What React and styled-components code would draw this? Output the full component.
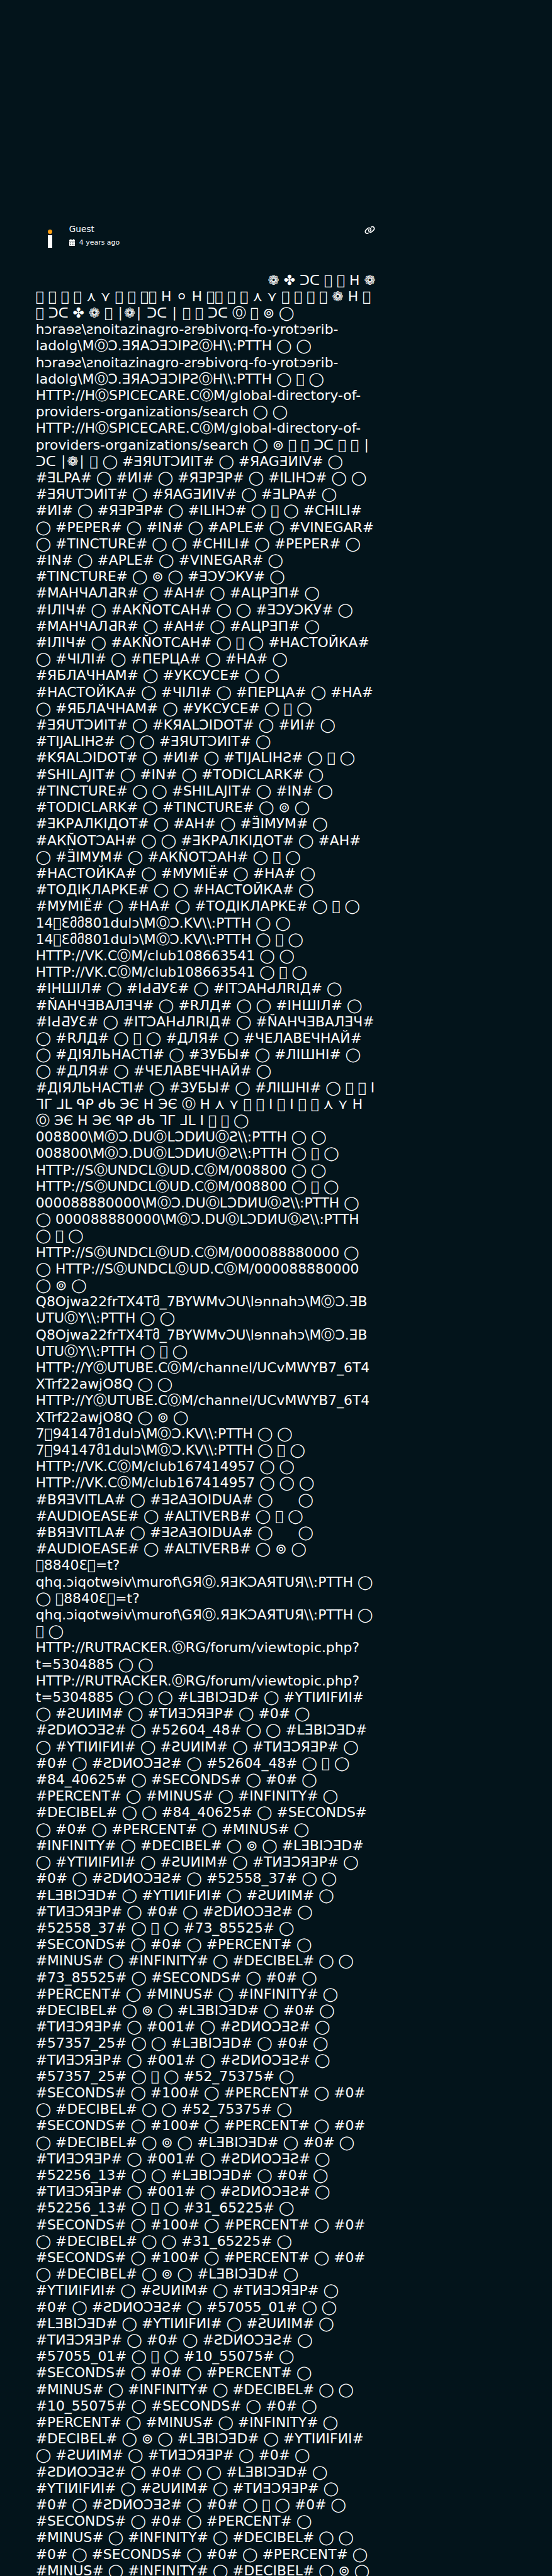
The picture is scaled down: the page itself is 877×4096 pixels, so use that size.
import React from "react";
import styled, { createGlobalStyle } from "styled-components";
import { FaLink, FaCalendarDays } from "react-icons/fa6";

const GlobalStyle = createGlobalStyle`
    body {
        margin: 0;
        background-color: #03141b;
        color: #fff;
        font-family: "DejaVu Sans", sans-serif;
    }
`;

const Page = styled.main`
    box-sizing: border-box;
    width: 877px;
    height: 4096px;
    padding: 356px 0 0 56.7px;
    overflow: hidden;
`;

const Header = styled.header`
    display: flex;
    align-items: flex-start;
    width: 539.5px;
    height: 76.6px;
`;

const Avatar = styled.div`
    display: flex;
    flex-direction: column;
    align-items: center;
    gap: 1.4px;
    width: 7.6px;
    margin: 8.6px 26.6px 0 18.9px;
`;

const Flame = styled.span`
    width: 7.6px;
    height: 7.8px;
    border-radius: 50%;
    background-color: #fd9f13;
`;

const Candle = styled.span`
    width: 7.6px;
    height: 19.8px;
    background-color: #fff;
`;

const Author = styled.div`
    flex: 1;
`;

const Name = styled.div`
    font-size: 13.66px;
    line-height: 17px;
`;

const Posted = styled.div`
    display: flex;
    align-items: center;
    gap: 6.5px;
    margin-top: 6px;
    font-size: 10.93px;
    line-height: 13px;
`;

const CalendarIcon = styled(FaCalendarDays)`
    width: 9.6px;
    height: 10.93px;
`;

const LinkIcon = styled(FaLink)`
    width: 17px;
    height: 13.66px;
    margin-top: 3.3px;
`;

const Post = styled.div`
    width: 540px;
    font-size: 21.856px;
    line-height: 26.214px;
`;

const Line = styled.div`
    height: 26.214px;
    white-space: pre;
    text-align: ${({ $end }) => ($end ? "right" : "left")};
`;

// "¤" stands for a character without a glyph, drawn as an empty box
const withBoxes = (line) => line.replace(/¤/g, "\uE123");

const lines = [
    "❁ ✤ ᑐᑕ ¤ ¤ H ❁",
    "¤ ¤ ¤ ¤ ⋏ ⋎ ¤ ¤ ¤¤ H ⚪ H ¤¤ ¤ ¤ ⋏ ⋎ ¤ ¤ ¤ ¤ ❁ H ¤",
    "¤ ᑐᑕ ✤ ❁ ¤ ∣❁∣ ᑐᑕ ∣ ¤ ¤ ᑐᑕ Ⓞ ¤ ⊚ ◯",
    "hɔraɘƨ\\ƨnoitazinagro-ƨrɘbivorq-fo-yrotɔɘrib-",
    "ladolg\\MⓄƆ.ƎЯAƆƎƆIPƧⓄH\\\\:PTTH ◯ ◯",
    "hɔraɘƨ\\ƨnoitazinagro-ƨrɘbivorq-fo-yrotɔɘrib-",
    "ladolg\\MⓄƆ.ƎЯAƆƎƆIPƧⓄH\\\\:PTTH ◯ ¤ ◯",
    "HTTP://HⓄSPICECARE.CⓄM/global-directory-of-",
    "providers-organizations/search ◯ ◯",
    "HTTP://HⓄSPICECARE.CⓄM/global-directory-of-",
    "providers-organizations/search ◯ ⊚ ¤ ¤ ᑐᑕ ¤ ¤ ∣",
    "ᑐᑕ ∣❁∣ ¤ ◯ #ƎЯUTƆИIT# ◯ #ЯAGƎИIV# ◯",
    "#ƎLPA# ◯ #ИI# ◯ #ЯƎPƎP# ◯ #ILIHƆ# ◯ ◯",
    "#ƎЯUTƆИIT# ◯ #ЯAGƎИIV# ◯ #ƎLPA# ◯",
    "#ИI# ◯ #ЯƎPƎP# ◯ #ILIHƆ# ◯ ¤ ◯ #CHILI#",
    "◯ #PEPER# ◯ #IN# ◯ #APLE# ◯ #VINEGAR#",
    "◯ #TINCTURE# ◯ ◯ #CHILI# ◯ #PEPER# ◯",
    "#IN# ◯ #APLE# ◯ #VINEGAR# ◯",
    "#TINCTURE# ◯ ⊚ ◯ #ƎƆУƆКУ# ◯",
    "#МАНЧАЛƋR# ◯ #АН# ◯ #АЦРƎП# ◯",
    "#ІЛІЧ# ◯ #АКN̆ОТСАН# ◯ ◯ #ƎƆУƆКУ# ◯",
    "#МАНЧАЛƋR# ◯ #АН# ◯ #АЦРƎП# ◯",
    "#ІЛІЧ# ◯ #АКN̆ОТСАН# ◯ ¤ ◯ #НАСТОЙКА#",
    "◯ #ЧІЛІ# ◯ #ПЕРЦА# ◯ #НА# ◯",
    "#ЯБЛАЧНАМ# ◯ #УКСУСЕ# ◯ ◯",
    "#НАСТОЙКА# ◯ #ЧІЛІ# ◯ #ПЕРЦА# ◯ #НА#",
    "◯ #ЯБЛАЧНАМ# ◯ #УКСУСЕ# ◯ ¤ ◯",
    "#ƎЯUTƆИIT# ◯ #KЯALƆIDOT# ◯ #ИI# ◯",
    "#TIJALIHƧ# ◯ ◯ #ƎЯUTƆИIT# ◯",
    "#KЯALƆIDOT# ◯ #ИI# ◯ #TIJALIHƧ# ◯ ¤ ◯",
    "#SHILAJIT# ◯ #IN# ◯ #TODICLARK# ◯",
    "#TINCTURE# ◯ ◯ #SHILAJIT# ◯ #IN# ◯",
    "#TODICLARK# ◯ #TINCTURE# ◯ ⊚ ◯",
    "#ƎКРАЛКІДОТ# ◯ #АН# ◯ #Ǝ̈ІМУМ# ◯",
    "#АКN̆ОТƆАН# ◯ ◯ #ƎКРАЛКІДОТ# ◯ #АН#",
    "◯ #Ǝ̈ІМУМ# ◯ #АКN̆ОТƆАН# ◯ ¤ ◯",
    "#НАСТОЙКА# ◯ #МУМІЁ# ◯ #НА# ◯",
    "#ТОДІКЛАРКЕ# ◯ ◯ #НАСТОЙКА# ◯",
    "#МУМІЁ# ◯ #НА# ◯ #ТОДІКЛАРКЕ# ◯ ¤ ◯",
    "14¤Ɛმმ801dulɔ\\MⓄƆ.KV\\\\:PTTH ◯ ◯",
    "14¤Ɛმმ801dulɔ\\MⓄƆ.KV\\\\:PTTH ◯ ¤ ◯",
    "HTTP://VK.CⓄM/club108663541 ◯ ◯",
    "HTTP://VK.CⓄM/club108663541 ◯ ¤ ◯",
    "#ІНШІЛ# ◯ #ІԀƋУƐ# ◯ #ІТƆАНԀЛRІД# ◯",
    "#N̆АНЧƎВАЛƎЧ# ◯ #RЛД# ◯ ◯ #ІНШІЛ# ◯",
    "#ІԀƋУƐ# ◯ #ІТƆАНԀЛRІД# ◯ #N̆АНЧƎВАЛƎЧ#",
    "◯ #RЛД# ◯ ¤ ◯ #ДЛЯ# ◯ #ЧЕЛАВЕЧНАЙ#",
    "◯ #ДІЯЛЬНАСТІ# ◯ #ЗУБЫ# ◯ #ЛІШНІ# ◯",
    "◯ #ДЛЯ# ◯ #ЧЕЛАВЕЧНАЙ# ◯",
    "#ДІЯЛЬНАСТІ# ◯ #ЗУБЫ# ◯ #ЛІШНІ# ◯ ¤ ¤ I",
    "ᒣᒥ ᒧᒪ ᑫᑭ ᑯᑲ ЭЄ H ЭЄ Ⓞ H ⋏ ⋎ ¤ ¤ I ¤ I ¤ ¤ ⋏ ⋎ H",
    "Ⓞ ЭЄ H ЭЄ ᑫᑭ ᑯᑲ ᒣᒥ ᒧᒪ I ¤ ¤ ◯",
    "008800\\MⓄƆ.DUⓄLƆDИUⓄƧ\\\\:PTTH ◯ ◯",
    "008800\\MⓄƆ.DUⓄLƆDИUⓄƧ\\\\:PTTH ◯ ¤ ◯",
    "HTTP://SⓄUNDCLⓄUD.CⓄM/008800 ◯ ◯",
    "HTTP://SⓄUNDCLⓄUD.CⓄM/008800 ◯ ¤ ◯",
    "000088880000\\MⓄƆ.DUⓄLƆDИUⓄƧ\\\\:PTTH ◯",
    "◯ 000088880000\\MⓄƆ.DUⓄLƆDИUⓄƧ\\\\:PTTH",
    "◯ ¤ ◯",
    "HTTP://SⓄUNDCLⓄUD.CⓄM/000088880000 ◯",
    "◯ HTTP://SⓄUNDCLⓄUD.CⓄM/000088880000",
    "◯ ⊚ ◯",
    "Q8Ojwa22frTX4Tმ_7BYWMvƆU\\lɘnnahɔ\\MⓄƆ.ƎB",
    "UTUⓄY\\\\:PTTH ◯ ◯",
    "Q8Ojwa22frTX4Tმ_7BYWMvƆU\\lɘnnahɔ\\MⓄƆ.ƎB",
    "UTUⓄY\\\\:PTTH ◯ ¤ ◯",
    "HTTP://YⓄUTUBE.CⓄM/channel/UCvMWYB7_6T4",
    "XTrf22awjO8Q ◯ ◯",
    "HTTP://YⓄUTUBE.CⓄM/channel/UCvMWYB7_6T4",
    "XTrf22awjO8Q ◯ ⊚ ◯",
    "7¤94147მ1dulɔ\\MⓄƆ.KV\\\\:PTTH ◯ ◯",
    "7¤94147მ1dulɔ\\MⓄƆ.KV\\\\:PTTH ◯ ¤ ◯",
    "HTTP://VK.CⓄM/club167414957 ◯ ◯",
    "HTTP://VK.CⓄM/club167414957 ◯ ◯ ◯",
    "#BЯƎVITLA# ◯ #ƎƧAƎOIDUA# ◯ \u2003\u2002◯",
    "#AUDIOEASE# ◯ #ALTIVERB# ◯ ¤ ◯",
    "#BЯƎVITLA# ◯ #ƎƧAƎOIDUA# ◯ \u2003\u2002◯",
    "#AUDIOEASE# ◯ #ALTIVERB# ◯ ⊚ ◯",
    "¤8840Ɛ¤=t?",
    "qhq.ɔiqotwɘiv\\murof\\GЯⓄ.ЯƎKƆAЯTUЯ\\\\:PTTH ◯",
    "◯ ¤8840Ɛ¤=t?",
    "qhq.ɔiqotwɘiv\\murof\\GЯⓄ.ЯƎKƆAЯTUЯ\\\\:PTTH ◯",
    "¤ ◯",
    "HTTP://RUTRACKER.ⓄRG/forum/viewtopic.php?",
    "t=5304885 ◯ ◯",
    "HTTP://RUTRACKER.ⓄRG/forum/viewtopic.php?",
    "t=5304885 ◯ ◯ ◯ #LƎBIƆƎD# ◯ #YTIИIFИI#",
    "◯ #ƧUИIM# ◯ #TИƎƆЯƎP# ◯ #0# ◯",
    "#ƧDИOƆƎƧ# ◯ #52604_48# ◯ ◯ #LƎBIƆƎD#",
    "◯ #YTIИIFИI# ◯ #ƧUИIM# ◯ #TИƎƆЯƎP# ◯",
    "#0# ◯ #ƧDИOƆƎƧ# ◯ #52604_48# ◯ ¤ ◯",
    "#84_40625# ◯ #SECONDS# ◯ #0# ◯",
    "#PERCENT# ◯ #MINUS# ◯ #INFINITY# ◯",
    "#DECIBEL# ◯ ◯ #84_40625# ◯ #SECONDS#",
    "◯ #0# ◯ #PERCENT# ◯ #MINUS# ◯",
    "#INFINITY# ◯ #DECIBEL# ◯ ⊚ ◯ #LƎBIƆƎD#",
    "◯ #YTIИIFИI# ◯ #ƧUИIM# ◯ #TИƎƆЯƎP# ◯",
    "#0# ◯ #ƧDИOƆƎƧ# ◯ #52558_37# ◯ ◯",
    "#LƎBIƆƎD# ◯ #YTIИIFИI# ◯ #ƧUИIM# ◯",
    "#TИƎƆЯƎP# ◯ #0# ◯ #ƧDИOƆƎƧ# ◯",
    "#52558_37# ◯ ¤ ◯ #73_85525# ◯",
    "#SECONDS# ◯ #0# ◯ #PERCENT# ◯",
    "#MINUS# ◯ #INFINITY# ◯ #DECIBEL# ◯ ◯",
    "#73_85525# ◯ #SECONDS# ◯ #0# ◯",
    "#PERCENT# ◯ #MINUS# ◯ #INFINITY# ◯",
    "#DECIBEL# ◯ ⊚ ◯ #LƎBIƆƎD# ◯ #0# ◯",
    "#TИƎƆЯƎP# ◯ #001# ◯ #ƧDИOƆƎƧ# ◯",
    "#57357_25# ◯ ◯ #LƎBIƆƎD# ◯ #0# ◯",
    "#TИƎƆЯƎP# ◯ #001# ◯ #ƧDИOƆƎƧ# ◯",
    "#57357_25# ◯ ¤ ◯ #52_75375# ◯",
    "#SECONDS# ◯ #100# ◯ #PERCENT# ◯ #0#",
    "◯ #DECIBEL# ◯ ◯ #52_75375# ◯",
    "#SECONDS# ◯ #100# ◯ #PERCENT# ◯ #0#",
    "◯ #DECIBEL# ◯ ⊚ ◯ #LƎBIƆƎD# ◯ #0# ◯",
    "#TИƎƆЯƎP# ◯ #001# ◯ #ƧDИOƆƎƧ# ◯",
    "#52256_13# ◯ ◯ #LƎBIƆƎD# ◯ #0# ◯",
    "#TИƎƆЯƎP# ◯ #001# ◯ #ƧDИOƆƎƧ# ◯",
    "#52256_13# ◯ ¤ ◯ #31_65225# ◯",
    "#SECONDS# ◯ #100# ◯ #PERCENT# ◯ #0#",
    "◯ #DECIBEL# ◯ ◯ #31_65225# ◯",
    "#SECONDS# ◯ #100# ◯ #PERCENT# ◯ #0#",
    "◯ #DECIBEL# ◯ ⊚ ◯ #LƎBIƆƎD# ◯",
    "#YTIИIFИI# ◯ #ƧUИIM# ◯ #TИƎƆЯƎP# ◯",
    "#0# ◯ #ƧDИOƆƎƧ# ◯ #57055_01# ◯ ◯",
    "#LƎBIƆƎD# ◯ #YTIИIFИI# ◯ #ƧUИIM# ◯",
    "#TИƎƆЯƎP# ◯ #0# ◯ #ƧDИOƆƎƧ# ◯",
    "#57055_01# ◯ ¤ ◯ #10_55075# ◯",
    "#SECONDS# ◯ #0# ◯ #PERCENT# ◯",
    "#MINUS# ◯ #INFINITY# ◯ #DECIBEL# ◯ ◯",
    "#10_55075# ◯ #SECONDS# ◯ #0# ◯",
    "#PERCENT# ◯ #MINUS# ◯ #INFINITY# ◯",
    "#DECIBEL# ◯ ⊚ ◯ #LƎBIƆƎD# ◯ #YTIИIFИI#",
    "◯ #ƧUИIM# ◯ #TИƎƆЯƎP# ◯ #0# ◯",
    "#ƧDИOƆƎƧ# ◯ #0# ◯ ◯ #LƎBIƆƎD# ◯",
    "#YTIИIFИI# ◯ #ƧUИIM# ◯ #TИƎƆЯƎP# ◯",
    "#0# ◯ #ƧDИOƆƎƧ# ◯ #0# ◯ ¤ ◯ #0# ◯",
    "#SECONDS# ◯ #0# ◯ #PERCENT# ◯",
    "#MINUS# ◯ #INFINITY# ◯ #DECIBEL# ◯ ◯",
    "#0# ◯ #SECONDS# ◯ #0# ◯ #PERCENT# ◯",
    "#MINUS# ◯ #INFINITY# ◯ #DECIBEL# ◯ ⊚ ◯",
];

const App = () => (
    <>
        <GlobalStyle />
        <Page>
            <Header>
                <Avatar>
                    <Flame />
                    <Candle />
                </Avatar>
                <Author>
                    <Name>Guest</Name>
                    <Posted>
                        <CalendarIcon />
                        <span>4 years ago</span>
                    </Posted>
                </Author>
                <LinkIcon />
            </Header>
            <Post>
                {lines.map((line, index) => (
                    <Line key={index} $end={index === 0}>{withBoxes(line)}</Line>
                ))}
            </Post>
        </Page>
    </>
);

export default App;
